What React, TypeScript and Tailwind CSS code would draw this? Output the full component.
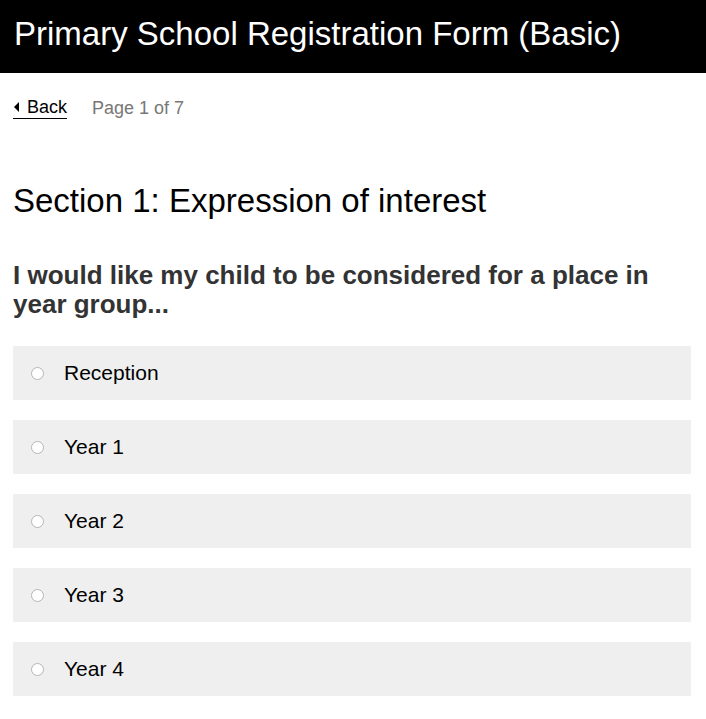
import { useState } from "react";

const options = ["Reception", "Year 1", "Year 2", "Year 3", "Year 4"];

export default function App() {
  const [picked, setPicked] = useState<string | null>(null);

  return (
    <div className="min-h-screen bg-white font-['Liberation_Sans',Arial,sans-serif]">
      <header className="h-[73px] bg-black px-[14px] pt-[16px]">
        <h1 className="text-[33px] leading-[36px] text-white">Primary School Registration Form (Basic)</h1>
      </header>

      <div className="px-[13px]">
        <nav className="mt-[24px] flex items-center gap-[25px] text-[18px] leading-[20px]">
          <a href="#" className="flex items-center gap-[8px] border-b border-black pb-[1px] pl-[1px] text-black">
            <span className="inline-block h-0 w-0 border-y-[5px] border-r-[5px] border-y-transparent border-r-black" />
            Back
          </a>
          <span className="text-[#777]">Page 1 of 7</span>
        </nav>

        <h2 className="mt-[64px] text-[33px] leading-[36px] text-black">Section 1: Expression of interest</h2>

        <h3 className="mt-[42px] text-[26px] font-bold leading-[29px] text-[#333]">
          I would like my child to be considered for a place in year group...
        </h3>

        <div className="mt-[27px] flex w-[678px] flex-col gap-[20px]">
          {options.map((o) => (
            <label key={o} className="flex h-[54px] cursor-pointer items-center bg-[#efefef] pl-[18px]">
              <span className="flex h-[13px] w-[13px] items-center justify-center rounded-full border border-[#b5b5b5] bg-white">
                {picked === o && <span className="h-[7px] w-[7px] rounded-full bg-[#333]" />}
              </span>
              <input type="radio" name="year" className="hidden" checked={picked === o} onChange={() => setPicked(o)} />
              <span className="ml-[20px] text-[21px] text-black">{o}</span>
            </label>
          ))}
        </div>
      </div>
    </div>
  );
}
